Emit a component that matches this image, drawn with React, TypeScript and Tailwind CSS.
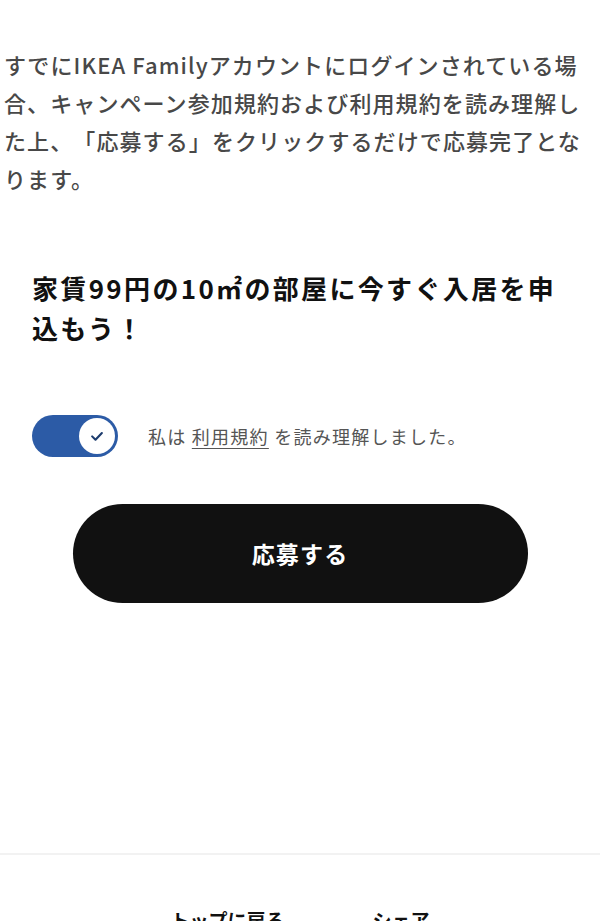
import React, { useState } from 'react';

const font = { fontFamily: '"Noto Sans CJK JP", "Noto Sans", sans-serif' };

const Toggle: React.FC<{ checked: boolean; onChange: () => void }> = ({ checked, onChange }) => (
  <button
    type="button"
    onClick={onChange}
    className={`relative flex h-[42px] w-[86px] shrink-0 items-center rounded-full p-[3px] transition-colors ${
      checked ? 'justify-end bg-[#2c5ba6]' : 'justify-start bg-[#929292]'
    }`}
  >
    <span className="flex h-[36px] w-[36px] items-center justify-center rounded-full bg-white">
      {checked && (
        <svg width="18" height="18" viewBox="0 0 24 24" fill="none" stroke="#1d3c6e" strokeWidth="2.8" strokeLinecap="round" strokeLinejoin="round">
          <path d="M5.5 12.5l4.5 4.5L18.5 8" />
        </svg>
      )}
    </span>
  </button>
);

export default function App() {
  const [agreed, setAgreed] = useState(true);

  return (
    <div className="min-h-[921px] bg-white overflow-hidden [text-spacing-trim:space-all]" style={font}>
      {/* Intro */}
      <p className="px-[4px] pt-[45px] text-[22px] font-medium leading-[38px] tracking-[0.05em] text-[#484848]">
        すでにIKEA Familyアカウントにログインされている場合、キャンペーン参加規約および利用規約を読み理解した上、「応募する」をクリックするだけで応募完了となります。
      </p>

      {/* Form */}
      <div className="px-[32px] pt-[71px]">
        <h2 className="text-[26px] font-bold leading-[40px] tracking-[0.09em] text-[#111111]">
          家賃99円の10㎡の部屋に今すぐ入居を申込もう！
        </h2>

        <div className="mt-[67px] flex items-center gap-[30px]">
          <Toggle checked={agreed} onChange={() => setAgreed(!agreed)} />
          <p className="text-[18px] leading-[24px] tracking-[0.07em] text-[#555555]">
            私は <span className="underline underline-offset-[4px] decoration-[1px]">利用規約</span> を読み理解しました。
          </p>
        </div>
      </div>

      <div className="pt-[47px]">
        <button
          type="button"
          className="mx-auto flex h-[99px] w-[455px] items-center justify-center rounded-full bg-[#111111] text-[23px] font-bold tracking-[0.05em] text-white"
        >
          応募する
        </button>
      </div>

      {/* Footer */}
      <div className="mt-[250px] border-t-2 border-[#f2f2f2]">
        <div className="flex justify-center gap-[88px] pt-[52px]">
          <a className="text-[19px] font-bold leading-[26px] text-[#111111]">トップに戻る</a>
          <a className="text-[19px] font-bold leading-[26px] text-[#111111]">シェア</a>
        </div>
      </div>
    </div>
  );
}
